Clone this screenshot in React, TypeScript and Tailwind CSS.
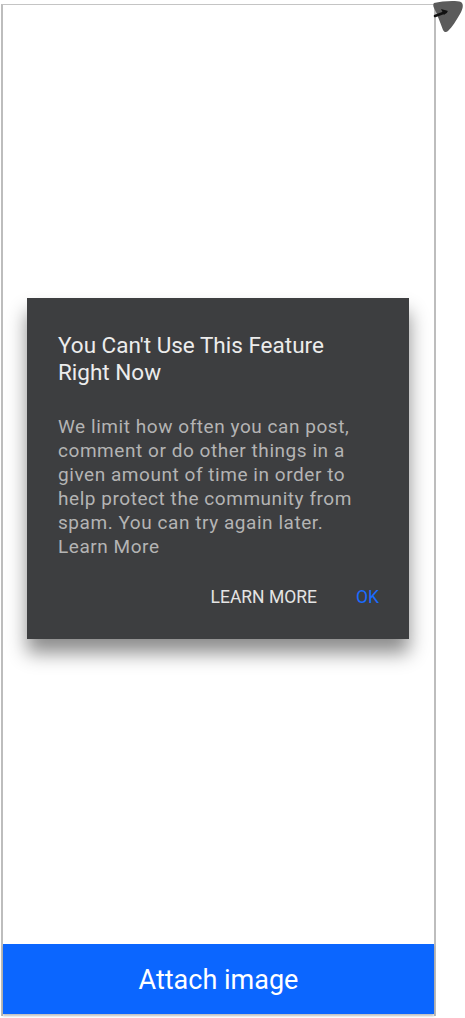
import React from "react";

export default function App() {
  return (
    <div
      className="relative w-[465px] h-[1018px] bg-white overflow-hidden"
      style={{ fontFamily: "Roboto, 'Noto Sans', sans-serif" }}
    >
      <div className="pt-[4px] pl-[1px]">
        <div className="w-[435px] h-[1012px] border-t border-t-[#c4c4c4] border-l-2 border-l-[#bdbdbd] border-r-2 border-r-[#bdbdbd] flex flex-col">
          <div className="flex-1" />
          <button className="h-[70px] mb-[2px] bg-[#0b66ff] text-white text-[27px] flex items-center justify-center pt-[3px] shadow-[0_2px_2px_rgba(0,0,0,0.25)]">
            Attach image
          </button>
        </div>
      </div>

      {/* top-right blurred cursor blob */}
      <svg
        className="absolute left-[432px] top-0"
        width="33"
        height="34"
        viewBox="0 0 33 34"
      >
        <path
          d="M2 3 C 10 1, 24 0, 29 2 C 32 4, 31 9, 28 14 C 24 21, 20 27, 16 31 C 14 33, 12 32, 11 30 C 8 22, 5 14, 2 8 C 1 6, 1 4, 2 3 Z"
          fill="#5b5b5b"
        />
        <path d="M3 16 L 14 12" stroke="#111" strokeWidth="2.5" strokeLinecap="round" />
        <path d="M9 9 L 16 11 L 12 15 Z" fill="#111" />
      </svg>

      {/* dialog */}
      <div className="absolute left-[27px] top-[298px] w-[382px] bg-[#3d3e40] shadow-[0_14px_18px_rgba(0,0,0,0.45)] pt-[34px] pb-[30px] pl-[31px] pr-[20px]">
        <div className="text-[22.5px] leading-[27px] text-[#ececec]">
          You Can't Use This Feature
          <br />
          Right Now
        </div>
        <div className="mt-[29px] text-[19px] leading-[24px] tracking-[0.55px] text-[#b4b4b4] whitespace-nowrap">
          We limit how often you can post,
          <br />
          comment or do other things in a
          <br />
          given amount of time in order to
          <br />
          help protect the community from
          <br />
          spam. You can try again later.
          <br />
          Learn More
        </div>
        <div className="mt-[26px] mr-[10px] flex justify-end items-center gap-[39px] text-[17.5px] leading-[24px]">
          <span className="text-[#e4e4e4]">LEARN MORE</span>
          <span className="text-[#1a6bff]">OK</span>
        </div>
      </div>
    </div>
  );
}
